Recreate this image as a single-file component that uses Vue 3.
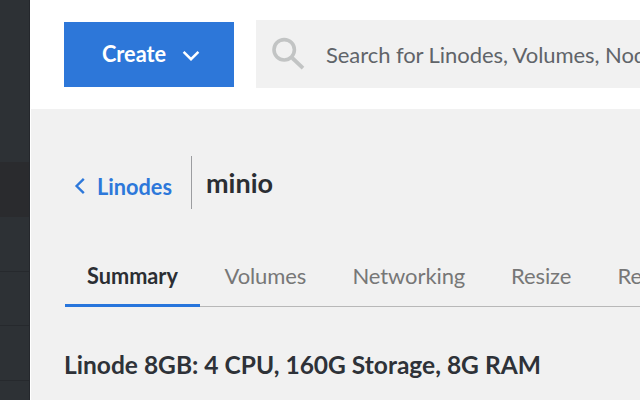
<script setup>
const navRows = [
  { h: 162, kind: 'top' },
  { h: 55, kind: 'active' },
  { h: 55, kind: '' },
  { h: 54, kind: '' },
  { h: 55, kind: '' },
  { h: 19, kind: 'last' },
]
const tabs = [
  { label: 'Volumes', cls: 'volumes' },
  { label: 'Networking', cls: 'networking' },
  { label: 'Resize', cls: 'resize' },
  { label: 'Rescue', cls: 'rescue' },
]
</script>

<template>
  <div class="app">
    <aside class="sidebar">
      <div v-for="(r, i) in navRows" :key="i" class="row" :class="r.kind" :style="{ height: r.h + 'px' }"></div>
    </aside>
    <div class="content">
      <header class="topbar">
        <button class="create">
          <span class="narrow">Create</span>
          <svg class="chev" width="18" height="12" viewBox="0 0 18 12"><path d="M1.6 1.8 9 9.2 16.4 1.8" fill="none" stroke="#fff" stroke-width="2.5" /></svg>
        </button>
        <div class="search">
          <svg class="glass" width="34" height="34" viewBox="0 0 34 34" fill="none" stroke="#c2c4c4">
            <circle cx="12.2" cy="12.8" r="10.2" stroke-width="3.6" />
            <path d="M20.3 21 31 31.2" stroke-width="3.8" />
          </svg>
          <span class="placeholder">Search for Linodes, Volumes, NodeBalancers</span>
        </div>
      </header>
      <main>
        <div class="crumbs">
          <svg class="back" width="12" height="18" viewBox="0 0 12 18"><path d="M9.8 1.8 2.6 9 9.8 16.2" fill="none" stroke="#2d78da" stroke-width="2.4" /></svg>
          <a class="parent"><span class="narrow">Linodes</span></a>
          <h1>minio</h1>
        </div>
        <nav class="tabs">
          <a class="tab active"><span class="narrow">Summary</span></a>
          <a v-for="t in tabs" :key="t.label" class="tab" :class="t.cls"><span>{{ t.label }}</span></a>
        </nav>
        <h2>Linode 8GB: 4 CPU, 160G Storage, 8G RAM</h2>
      </main>
    </div>
  </div>
</template>

<style>
body { overflow: hidden; }
</style>
<style scoped>
.app { display: flex; width: 640px; height: 400px; overflow: hidden; font-family: Lato, sans-serif; background: #f1f1f1; }
.sidebar { flex: none; width: 30px; box-sizing: border-box; background: #2d3135; border-right: 1px solid #24272c; }
.row { box-sizing: border-box; border-bottom: 1px solid #26292d; }
.row.top { border-bottom: 0; }
.row.active { background: #2a2b2e; border: 0; }
.row.last { border: 0; }
.content { width: 610px; flex: none; overflow: hidden; box-sizing: border-box; border-left: 1px solid #fff; }
.narrow { display: inline-block; transform: scaleX(0.965); transform-origin: 0 50%; }
.topbar { display: flex; height: 109px; background: #fff; box-sizing: border-box; padding: 20px 0 0 33px; }
.create { display: flex; align-items: center; flex: none; width: 170px; height: 65px; margin: 2px 22px 0 0; padding: 0 0 1px 38px; border: 0; background: #2d77d9; color: #fff; font: 700 22.5px/26px Lato, sans-serif; box-sizing: border-box; }
.create span { width: 80px; text-align: left; }
.chev { margin-top: 4px; }
.search { display: flex; flex: none; width: 400px; height: 68px; background: #f1f1f1; box-sizing: border-box; padding-left: 16px; }
.glass { margin-top: 17px; flex: none; }
.placeholder { margin-left: 20px; white-space: nowrap; color: #606469; font-size: 22px; line-height: 70px; letter-spacing: -0.07px; }
main { padding: 47px 0 0 33px; }
.crumbs { display: flex; height: 53px; align-items: center; }
.back { margin: 7px 0 0 10px; }
.parent { margin: 8px 0 0 10.5px; width: 94.5px; color: #2d78da; font-size: 22.5px; line-height: 26px; font-weight: 700; }
h1 { margin: 0; height: 53px; border-left: 1px solid #9c9da0; padding-left: 14px; color: #2b2e33; font-size: 27px; line-height: 54px; font-weight: 700; }
.tabs { display: flex; height: 58px; margin: 40px 0 0 1px; border-bottom: 1px solid #b8b8b8; box-sizing: border-box; width: 640px; }
.tab { font-size: 22px; line-height: 54px; color: #777; white-space: nowrap; letter-spacing: -0.1px; }
.tab.active { width: 135px; padding-left: 22px; box-sizing: border-box; height: 58px; border-bottom: 3px solid #2775dc; color: #2b2e33; font-size: 22.5px; line-height: 53px; font-weight: 700; letter-spacing: 0; }
.volumes { width: 128px; margin-left: 24.5px; }
.networking { width: 158.5px; }
.resize { width: 106.5px; }
h2 { margin: 41px 0 0; color: #2e3238; font-size: 25.5px; line-height: 32px; font-weight: 700; white-space: nowrap; transform: scaleX(0.962); transform-origin: 0 50%; }
</style>
